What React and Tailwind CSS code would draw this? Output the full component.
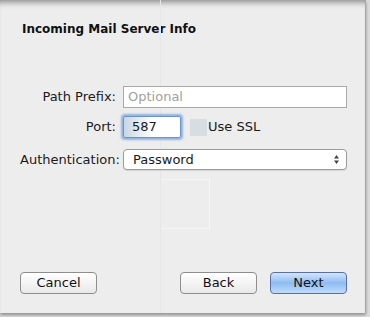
import React from "react";

const font = { fontFamily: '"Lucida Grande", "DejaVu Sans", sans-serif' };

function Btn({ children, primary }) {
  return (
    <div
      className={
        "w-[77px] h-[22px] rounded-[4px] border flex items-center justify-center text-[13px] text-[#111] " +
        (primary
          ? "border-[#5a6fa8] bg-gradient-to-b from-[#d3e6fc] via-[#8ebbf3] to-[#c0dcfb]"
          : "border-[#8e8e8e] bg-gradient-to-b from-[#ffffff] via-[#f4f4f4] to-[#e9e9e9]")
      }
    >
      {children}
    </div>
  );
}

export default function App() {
  return (
    <div className="w-[370px] h-[317px] bg-[#dcdcdc] overflow-hidden" style={font}>
      <div className="relative w-[366px] h-[313px] bg-[#ededed] border-r border-[#a8a8a8] shadow-[inset_0_7px_6px_-5px_rgba(0,0,0,0.45),0_2px_3px_rgba(0,0,0,0.35)] flex flex-col">
        <div className="absolute left-[160px] top-0 bottom-0 w-px bg-[#e6e6e6]" />
        <div className="pl-[22px] pt-[21px] text-[12px] leading-[16px] font-bold text-[#111]">
          Incoming Mail Server Info
        </div>
        <div className="relative mt-[49px] pl-[20px] grid grid-cols-[96px_224px] gap-x-[7px] items-center text-[13px] text-[#1a1a1a]">
          <div className="text-right">Path Prefix:</div>
          <div className="h-[22px] bg-white border border-[#a9a9a9] flex items-center pl-[4px] text-[#a0a0a0]">
            Optional
          </div>
          <div className="text-right mt-[8px]">Port:</div>
          <div className="mt-[8px] flex items-center">
            <div className="w-[58px] h-[22px] border border-[#6d93c9] shadow-[0_0_2px_2px_rgba(112,160,220,0.75)] rounded-[2px] flex items-center pl-[8px] bg-gradient-to-r from-[#c8d6e4] via-white to-white">
              587
            </div>
            <div className="ml-[9px] w-[17px] h-[17px] bg-[#d6dde3]" />
            <span className="ml-[1px]">Use SSL</span>
          </div>
          <div className="text-right mt-[11px]">Authentication:</div>
          <div className="mt-[11px] h-[21px] bg-white border border-[#9c9c9c] rounded-[4px] flex items-center justify-between pl-[9px] pr-[6px] shadow-[0_1px_1px_rgba(0,0,0,0.1)]">
            <span>Password</span>
            <svg width="7" height="11" viewBox="0 0 7 11">
              <path d="M3.5 1 L6 4.5 L1 4.5 Z" fill="#444" />
              <path d="M3.5 10 L6 6.5 L1 6.5 Z" fill="#444" />
            </svg>
          </div>
        </div>
        <div className="ml-[160px] mt-[9px] w-[50px] h-[50px] border border-[#f6f6f6]" />
        <div className="mt-auto mb-[19px] flex pl-[20px]">
          <Btn>Cancel</Btn>
          <div className="ml-[83px] flex gap-[13px]">
            <Btn>Back</Btn>
            <Btn primary>Next</Btn>
          </div>
        </div>
      </div>
    </div>
  );
}
